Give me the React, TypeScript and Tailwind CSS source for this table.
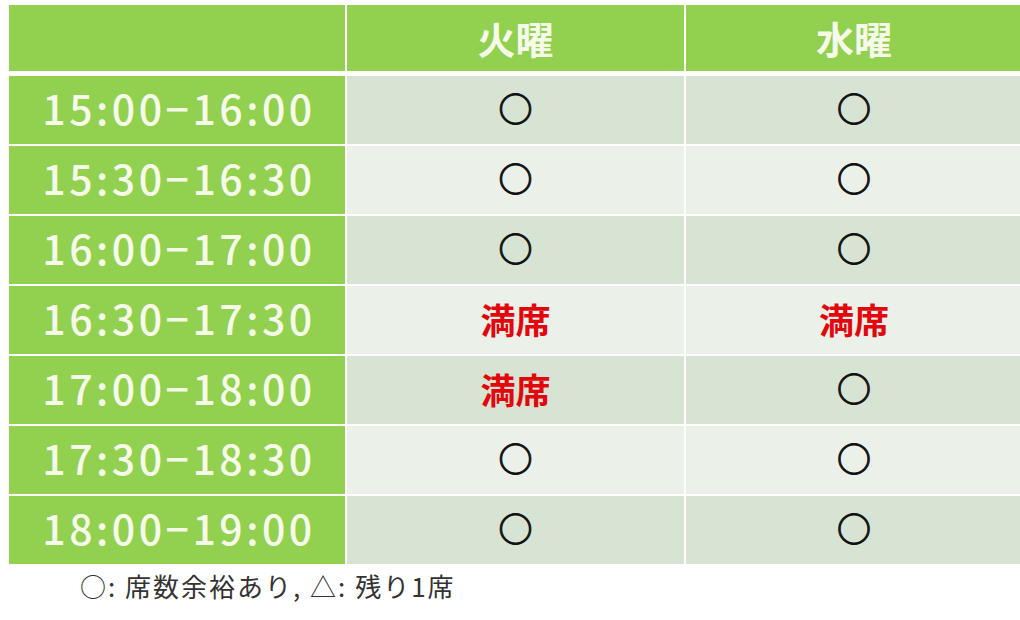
const slots = [
  { time: "15:00−16:00", tue: "○", wed: "○" },
  { time: "15:30−16:30", tue: "○", wed: "○" },
  { time: "16:00−17:00", tue: "○", wed: "○" },
  { time: "16:30−17:30", tue: "満席", wed: "満席" },
  { time: "17:00−18:00", tue: "満席", wed: "○" },
  { time: "17:30−18:30", tue: "○", wed: "○" },
  { time: "18:00−19:00", tue: "○", wed: "○" }
];

const jp = { fontFamily: '"Noto Sans CJK JP", "Noto Sans", sans-serif' };

function Mark({ value }: { value: string }) {
  if (value === "満席") {
    return <span className="text-[35px] font-bold leading-none text-[#e3060d]">{value}</span>;
  }
  return (
    <span className="text-[34px] font-bold leading-none text-[#111] [-webkit-text-stroke:1px_#111]">
      {value}
    </span>
  );
}

export default function App() {
  return (
    <div className="h-[620px] w-[1020px] overflow-hidden bg-white" style={jp}>
      <div className="pl-[9px] pt-[5px]">
        <div className="grid w-[1013px] grid-cols-[338px_339px_336px]">
          <div className="h-[66px] border-r-2 border-white bg-[#92d050]" />
          <div className="flex h-[66px] items-center justify-center border-r-2 border-white bg-[#92d050] pb-[2px] text-[38px] font-bold text-[#f6fbe9]">
            火曜
          </div>
          <div className="flex h-[66px] items-center justify-center bg-[#92d050] pb-[2px] text-[38px] font-bold text-[#f6fbe9]">
            水曜
          </div>
        </div>

        <div className="mt-[5px] grid w-[1013px] grid-cols-[338px_339px_336px] gap-y-[2px]">
          {slots.map((slot, i) => {
            const bg = i % 2 === 0 ? "bg-[#d8e4d3]" : "bg-[#ebf1e9]";
            return (
              <div key={slot.time} className="contents">
                <div className="flex h-[68px] items-center justify-center border-r-2 border-white bg-[#92d050] pb-[4px] pl-[4px] text-[41px] font-medium tracking-[3.5px] text-[#f6fbe9]">
                  {slot.time}
                </div>
                <div className={`flex h-[68px] items-center justify-center border-r-2 border-white pb-[4px] ${bg}`}>
                  <Mark value={slot.tue} />
                </div>
                <div className={`flex h-[68px] items-center justify-center pb-[4px] ${bg}`}>
                  <Mark value={slot.wed} />
                </div>
              </div>
            );
          })}
        </div>

        <p className="mt-[6px] pl-[71px] text-[26px] leading-[32px] tracking-[2px] text-[#333]">
          ○: 席数余裕あり, △: 残り1席
        </p>
      </div>
    </div>
  );
}
